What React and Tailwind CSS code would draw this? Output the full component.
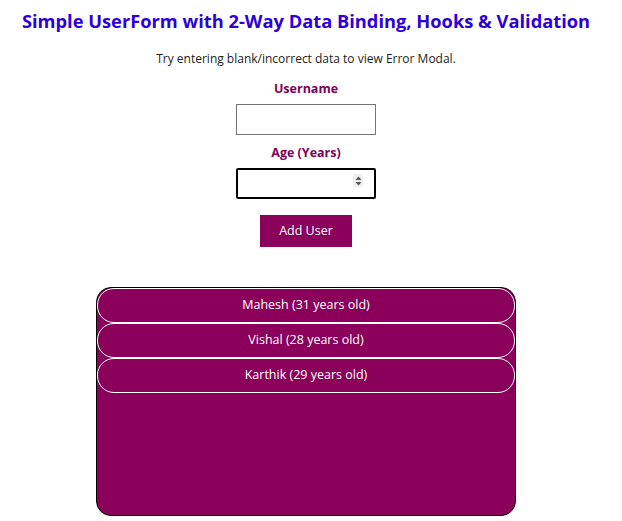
export default function App() {
  const users = [
    { name: "Mahesh", age: 31 },
    { name: "Vishal", age: 28 },
    { name: "Karthik", age: 29 },
  ];
  return (
    <div className="w-[612px] h-[521px] bg-white flex flex-col items-center" style={{ fontFamily: '"Open Sans", "Noto Sans", sans-serif' }}>
      <h1 className="mt-[9px] text-[18.3px] leading-[24px] font-bold text-[#2e00d9] whitespace-nowrap">
        Simple UserForm with 2-Way Data Binding, Hooks &amp; Validation
      </h1>
      <p className="mt-[17px] text-[12px] leading-[18px] text-[#222]">Try entering blank/incorrect data to view Error Modal.</p>
      <label className="mt-[12px] text-[12.5px] leading-[18px] font-bold text-[#7d0058]">Username</label>
      <input type="text" className="mt-[6px] w-[140px] h-[31px] border border-[#767676] bg-white outline-none" />
      <label className="mt-[9px] text-[12.5px] leading-[18px] font-bold text-[#7d0058]">Age (Years)</label>
      <div className="relative mt-[6px] w-[140px] h-[31px]">
        <input type="text" className="w-full h-full border-2 border-black rounded-[2px] bg-white outline-none px-1" />
        <div className="absolute left-[117px] top-[6px] w-[10px] h-[13px] bg-[#efefef] flex items-center justify-center">
          <svg width="7" height="10" viewBox="0 0 7 10">
            <path d="M3.5 0.5 L6.5 4 L0.5 4 Z" fill="#555" />
            <path d="M0.5 6 L6.5 6 L3.5 9.5 Z" fill="#555" />
          </svg>
        </div>
      </div>
      <button className="mt-[16px] w-[92px] h-[32px] bg-[#8a005a] text-white text-[12.5px]">Add User</button>
      <div className="mt-[40px] w-[420px] h-[229px] bg-[#8a005a] border border-black rounded-[15px] overflow-hidden flex flex-col">
        {users.map((u) => (
          <div key={u.name} className="h-[35px] border border-white rounded-[17px] flex items-center justify-center text-white text-[12.5px]">
            {u.name} ({u.age} years old)
          </div>
        ))}
      </div>
    </div>
  );
}
